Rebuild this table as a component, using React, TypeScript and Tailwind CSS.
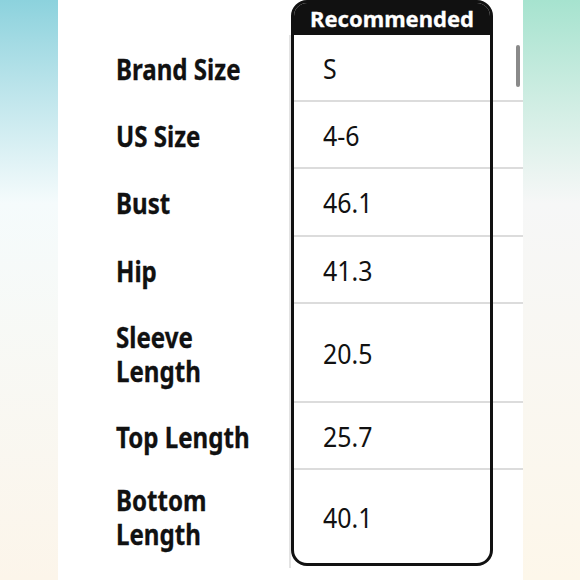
import React from 'react';

type Row = {
  label: string;
  value: string;
  h: string;
};

const rows: Row[] = [
  { label: 'Brand Size', value: 'S', h: 'h-[67px]' },
  { label: 'US Size', value: '4-6', h: 'h-[67px]' },
  { label: 'Bust', value: '46.1', h: 'h-[68px]' },
  { label: 'Hip', value: '41.3', h: 'h-[67px]' },
  { label: 'Sleeve\nLength', value: '20.5', h: 'h-[99px]' },
  { label: 'Top Length', value: '25.7', h: 'h-[67px]' },
  { label: 'Bottom\nLength', value: '40.1', h: 'h-[93px]' },
];

const App: React.FC = () => {
  return (
    <div className="flex w-[580px] h-[580px] overflow-hidden font-['Noto_Sans',sans-serif] text-[#111]">
      {/* left backdrop */}
      <div className="w-[58px] h-full bg-linear-to-b from-[#8cd2dd] via-[#f5fbfc] via-[35%] to-[#fcf5ea]" />

      {/* size panel */}
      <div className="flex w-[465px] h-full bg-white">
        <div className="w-[233px] flex flex-col">
          <div className="h-[35px] shrink-0" />
          <div className="flex flex-col border-r-2 border-[#e3e3e3] pl-[58px]">
            {rows.map((r) => (
              <div key={r.label} className={`${r.h} flex flex-col justify-center`}>
                <span className="block origin-left scale-x-[0.86] whitespace-pre-line text-[28px] font-bold leading-[34px] [-webkit-text-stroke:0.3px_#111]">
                  {r.label}
                </span>
              </div>
            ))}
            <div className="h-[5px]" />
          </div>
        </div>

        <div className="w-[202px] h-[566px] flex flex-col rounded-[16px] border-[3px] border-[#111] overflow-hidden">
          <div className="h-[32px] shrink-0 bg-[#111] flex items-center justify-center">
            <span className="text-white text-[22px] font-bold leading-none -mt-[3px] [-webkit-text-stroke:0.3px_#fff]">
              Recommended
            </span>
          </div>
          {rows.map((r, i) => (
            <div
              key={r.value}
              className={`${r.h} flex items-center pl-[29px] ${i < rows.length - 1 ? 'border-b-2 border-[#dcdcdc]' : ''}`}
            >
              <span className="block origin-left scale-x-[0.89] text-[28px] leading-none">{r.value}</span>
            </div>
          ))}
        </div>

        <div className="relative flex-1 flex flex-col">
          <div className="h-[35px] shrink-0" />
          {rows.slice(0, -1).map((r) => (
            <div key={r.value} className={`${r.h} border-b-2 border-[#dcdcdc]`} />
          ))}
          <div className="absolute left-[23px] top-[45px] w-[4px] h-[42px] rounded-full bg-[#8a8a8a]" />
        </div>
      </div>

      {/* right backdrop */}
      <div className="flex-1 h-full bg-linear-to-b from-[#a6e3cf] via-[#f6f7f7] via-[35%] to-[#fdf7ea]" />
    </div>
  );
};

export default App;
